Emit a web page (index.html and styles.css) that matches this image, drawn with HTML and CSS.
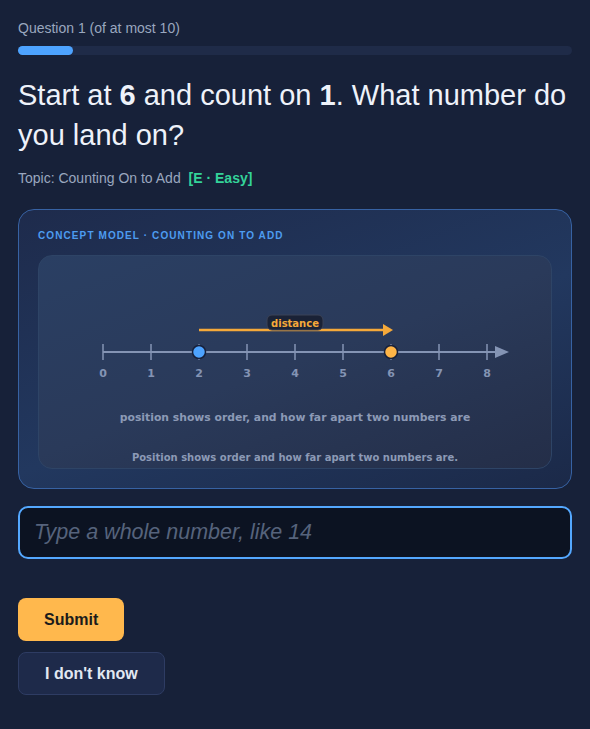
FILE: index.html
```html
<!DOCTYPE html>
<html lang="en">
<head>
    <meta charset="UTF-8">
    <meta name="viewport" content="width=device-width, initial-scale=1.0">
    <title>Counting On Quiz</title>
    <link rel="stylesheet" href="styles.css">
</head>
<body>
    <div class="quiz">
        <div class="progress-label">Question 1 (of at most 10)</div>
        <div class="progress-track"><div class="progress-fill" style="width: 10%"></div></div>

        <h1 class="question">Start at <b>6</b> and count on <b>1</b>. What number do you land on?</h1>
        <div class="topic">Topic: Counting On to Add <span class="level">[E · Easy]</span></div>

        <div class="concept-card">
            <div class="concept-label">CONCEPT MODEL · COUNTING ON TO ADD</div>
            <div class="concept-panel">
                <svg class="number-line" width="514" height="181" viewBox="0 0 514 181">
                    <!-- distance arrow -->
                    <line x1="161" y1="74" x2="347" y2="74" stroke="#f5a93a" stroke-width="2.5"/>
                    <polygon points="345,68 355,74 345,80" fill="#f5a93a"/>
                    <rect x="229" y="59" width="56" height="15" rx="5" fill="#1a2236" stroke="#3b4256" stroke-width="1"/>
                    <text x="257" y="70.5" class="nl-tag">distance</text>

                    <!-- axis -->
                    <line x1="65" y1="96" x2="460" y2="96" stroke="#8494b4" stroke-width="2"/>
                    <polygon points="457,90 471,96 457,102" fill="#8494b4"/>
                    <g stroke="#8494b4" stroke-width="1.5">
                        <line x1="65" y1="88" x2="65" y2="104"/>
                        <line x1="113" y1="88" x2="113" y2="104"/>
                        <line x1="161" y1="88" x2="161" y2="104"/>
                        <line x1="209" y1="88" x2="209" y2="104"/>
                        <line x1="257" y1="88" x2="257" y2="104"/>
                        <line x1="305" y1="88" x2="305" y2="104"/>
                        <line x1="353" y1="88" x2="353" y2="104"/>
                        <line x1="401" y1="88" x2="401" y2="104"/>
                        <line x1="449" y1="88" x2="449" y2="104"/>
                    </g>
                    <g class="nl-num">
                        <text x="65" y="121">0</text>
                        <text x="113" y="121">1</text>
                        <text x="161" y="121">2</text>
                        <text x="209" y="121">3</text>
                        <text x="257" y="121">4</text>
                        <text x="305" y="121">5</text>
                        <text x="353" y="121">6</text>
                        <text x="401" y="121">7</text>
                        <text x="449" y="121">8</text>
                    </g>
                    <circle cx="161" cy="96" r="6.5" fill="#4da3ff" stroke="#17203a" stroke-width="1.5"/>
                    <circle cx="353" cy="96" r="6.5" fill="#ffb547" stroke="#17203a" stroke-width="1.5"/>

                    <text x="257" y="165" class="nl-note">position shows order, and how far apart two numbers are</text>
                </svg>
                <div class="concept-caption">Position shows order and how far apart two numbers are.</div>
            </div>
        </div>

        <input class="answer" type="text" placeholder="Type a whole number, like 14">

        <div class="actions">
            <button type="button" class="btn-submit">Submit</button>
            <button type="button" class="btn-skip">I don't know</button>
        </div>
    </div>
</body>
</html>
```

FILE: styles.css
```css
body {
    margin: 0;
    background: #172139;
    font-family: "Liberation Sans", Arial, sans-serif;
    color: #e8eef8;
}
.quiz {
    padding: 20px 18px 30px;
}
.progress-label {
    font-size: 14px;
    line-height: 17px;
    color: #9aa7bf;
}
.progress-track {
    margin-top: 9px;
    height: 9px;
    border-radius: 5px;
    background: #1f2b48;
}
.progress-fill {
    height: 100%;
    border-radius: 5px;
    background: #4da3ff;
}
.question {
    margin: 20px 0 0;
    font-size: 29px;
    line-height: 40px;
    font-weight: normal;
    color: #eef2fa;
}
.question b {
    font-weight: bold;
}
.topic {
    margin-top: 15px;
    font-size: 14px;
    line-height: 17px;
    color: #9aa7bf;
}
.level {
    margin-left: 4px;
    color: #34d399;
    font-weight: bold;
}
.concept-card {
    margin-top: 22px;
    padding: 18px 19px 19px;
    border: 1px solid #3762a3;
    border-radius: 16px;
    background: linear-gradient(160deg, #1e2b4c 0%, #22385f 55%, #1b2948 100%);
}
.concept-label {
    font-family: "Liberation Sans", Arial, sans-serif;
    font-size: 10px;
    line-height: 16px;
    font-weight: bold;
    letter-spacing: 1.1px;
    color: #4d9cf0;
    margin-bottom: 11px;
}
.concept-panel {
    border-radius: 14px;
    border: 1px solid #2e4466;
    background: linear-gradient(160deg, #2a3f63 0%, #2a3a5a 50%, #242e48 100%);
    padding-bottom: 3px;
}
.number-line {
    display: block;
    margin-left: -1px;
}
.nl-num text {
    font-family: "DejaVu Sans", sans-serif;
    font-size: 11px;
    font-weight: bold;
    fill: #8494b4;
    text-anchor: middle;
}
.nl-tag {
    font-family: "DejaVu Sans", sans-serif;
    font-size: 10px;
    font-weight: bold;
    fill: #f5a93a;
    text-anchor: middle;
}
.nl-note {
    font-family: "DejaVu Sans", sans-serif;
    font-size: 10.8px;
    font-weight: bold;
    fill: #8c9ab6;
    text-anchor: middle;
}
.concept-caption {
    margin-top: 14px;
    font-family: "DejaVu Sans", sans-serif;
    font-size: 10px;
    line-height: 14px;
    font-weight: bold;
    color: #8c9ab6;
    text-align: center;
}
.answer {
    display: block;
    box-sizing: border-box;
    width: 100%;
    height: 53px;
    margin-top: 17px;
    padding: 0 14px;
    border: 2px solid #54a8ff;
    border-radius: 10px;
    background: #0c1322;
    color: #e8eef8;
    font-family: "Liberation Sans", Arial, sans-serif;
    font-size: 21.5px;
    outline: none;
}
.answer::placeholder {
    color: #56637c;
    font-style: italic;
}
.actions {
    margin-top: 39px;
    display: flex;
    flex-direction: column;
    align-items: flex-start;
    gap: 11px;
}
.actions button {
    height: 43px;
    padding: 0 26px;
    border-radius: 8px;
    font-family: "Liberation Sans", Arial, sans-serif;
    font-size: 16px;
    font-weight: bold;
    cursor: pointer;
}
.btn-submit {
    border: none;
    background: #ffb84d;
    color: #1b1b1b;
}
.btn-skip {
    border: 1px solid #2e3c63;
    background: #1e2a4a;
    color: #e2e8f2;
}
```
